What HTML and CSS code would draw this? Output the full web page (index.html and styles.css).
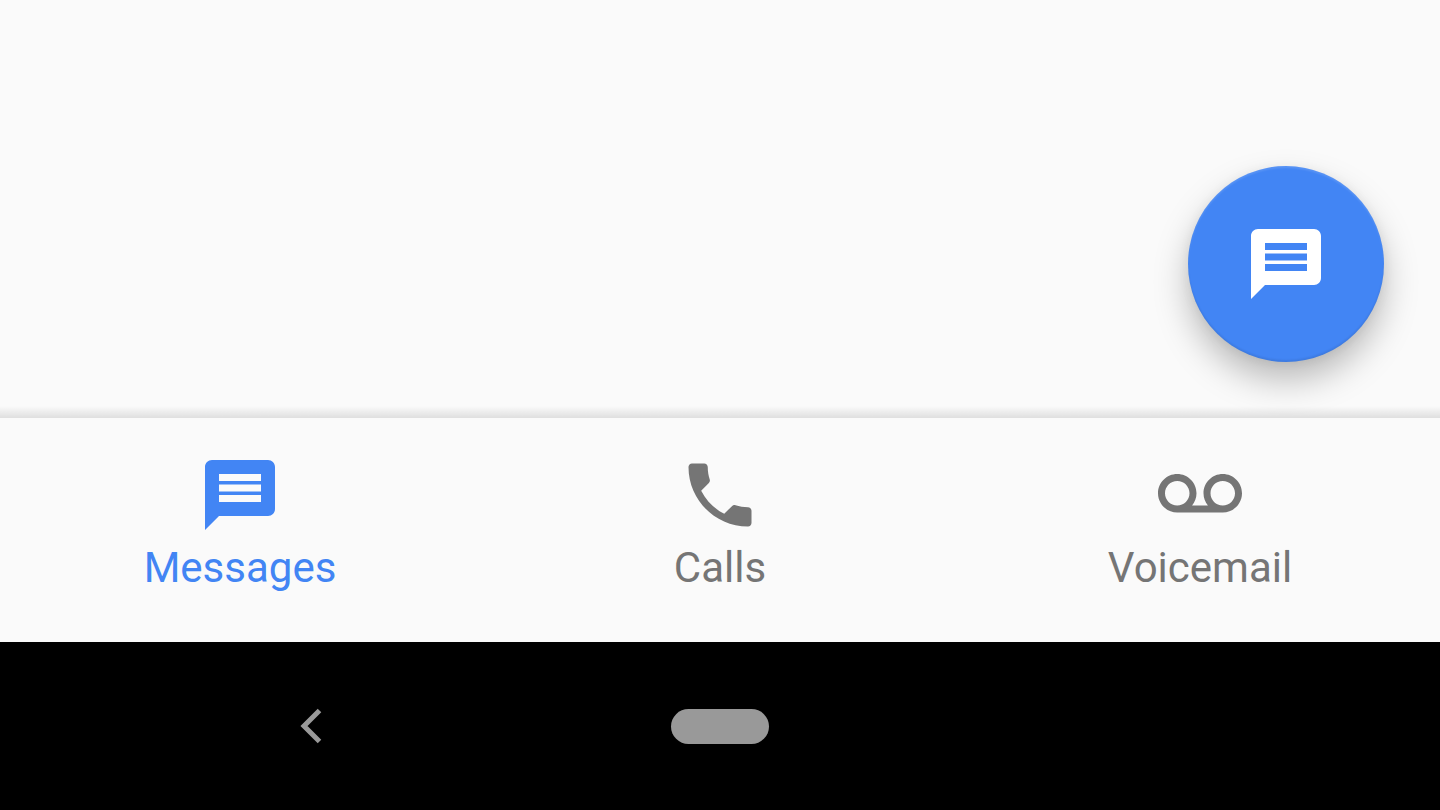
FILE: index.html
```html
<!DOCTYPE html>
<html lang="en">
<head>
  <meta charset="UTF-8" />
  <meta name="viewport" content="width=device-width, initial-scale=1" />
  <title>Messages</title>
  <link rel="stylesheet" href="styles.css">
</head>
<body>

<main class="content">
  <button class="fab" type="button" aria-label="New message">
    <svg class="icon" viewBox="0 0 24 24"><path d="M20 2H4c-1.1 0-2 .9-2 2v18l4-4h14c1.1 0 2-.9 2-2V4c0-1.1-.9-2-2-2zM6 6h12v2H6V6zm12 8H6v-2h12v2zm0-3H6V9h12v2z"/></svg>
  </button>
</main>

<!-- Bottom tabs -->
<div class="tabs-shadow"></div>
<nav class="tabs">
  <a class="tab active" href="#messages">
    <svg class="icon" viewBox="0 0 24 24"><path d="M20 2H4c-1.1 0-2 .9-2 2v18l4-4h14c1.1 0 2-.9 2-2V4c0-1.1-.9-2-2-2zM6 6h12v2H6V6zm12 8H6v-2h12v2zm0-3H6V9h12v2z"/></svg>
    <span>Messages</span>
  </a>
  <a class="tab" href="#calls">
    <svg class="icon" viewBox="0 0 24 24"><path d="M6.62 10.79c1.44 2.83 3.76 5.14 6.59 6.59l2.2-2.2c.27-.27.67-.36 1.02-.24 1.12.37 2.33.57 3.57.57.55 0 1 .45 1 1V20c0 .55-.45 1-1 1-9.39 0-17-7.61-17-17 0-.55.45-1 1-1h3.5c.55 0 1 .45 1 1 0 1.25.2 2.45.57 3.57.11.35.03.74-.25 1.02l-2.2 2.2z"/></svg>
    <span>Calls</span>
  </a>
  <a class="tab" href="#voicemail">
    <svg class="icon" viewBox="0 0 24 24"><path d="M18.5 6C15.46 6 13 8.46 13 11.5c0 1.33.47 2.55 1.26 3.5H9.74c.79-.95 1.26-2.17 1.26-3.5C11 8.46 8.54 6 5.5 6S0 8.46 0 11.5 2.46 17 5.5 17h13c3.04 0 5.5-2.46 5.5-5.5S21.54 6 18.5 6zm-13 9C3.57 15 2 13.43 2 11.5S3.57 8 5.5 8 9 9.57 9 11.5 7.43 15 5.5 15zm13 0c-1.93 0-3.5-1.57-3.5-3.5S16.57 8 18.5 8 22 9.57 22 11.5 20.43 15 18.5 15z"/></svg>
    <span>Voicemail</span>
  </a>
</nav>

<!-- System bar -->
<div class="system-bar">
  <button class="back" type="button" aria-label="Back">
    <svg viewBox="0 0 22 36"><path d="M19.500 2.500L4 18L19.500 33.500"/></svg>
  </button>
  <button class="home" type="button" aria-label="Home"></button>
</div>

</body>
</html>
```
FILE: styles.css
```css
body {
  font-family: Roboto, sans-serif;
  margin: 0;
  min-height: 100vh;
  display: flex;
  flex-direction: column;
  background: #fafafa;
}
button {
  border: none;
  padding: 0;
  cursor: pointer;
}
.icon {
  width: 84px;
  height: 84px;
  display: block;
  fill: currentColor;
}
.content {
  flex: 1;
  display: flex;
  justify-content: flex-end;
  align-items: flex-end;
  padding: 56px 56px 44px;
}
.fab {
  width: 196px;
  height: 196px;
  display: flex;
  justify-content: center;
  align-items: center;
  border-radius: 50%;
  background: #4285f4;
  color: #fff;
  box-shadow: 0 18px 34px rgba(0,0,0,0.26), 0 2px 12px rgba(0,0,0,0.06), inset 0 -2px 2px rgba(0,0,0,0.08), inset 0 2px 2px rgba(255,255,255,0.12);
}
.tabs-shadow {
  height: 12px;
  background: linear-gradient(rgba(0,0,0,0), rgba(0,0,0,0.11));
}
.tabs {
  display: flex;
}
.tab {
  flex: 1;
  display: flex;
  flex-direction: column;
  align-items: center;
  padding: 35px 0 43px;
  color: #757575;
  font-size: 42px;
  line-height: 62px;
  text-decoration: none;
}
.tab.active {
  color: #4285f4;
}
.system-bar {
  display: grid;
  grid-template-columns: 1fr 196px 1fr;
  align-items: center;
  justify-items: center;
  padding: 42px 0;
  background: #000;
}
.back {
  width: 84px;
  height: 84px;
  display: flex;
  justify-content: center;
  align-items: center;
  background: none;
}
.back svg {
  width: 22px;
  height: 36px;
  fill: none;
  stroke: #999;
  stroke-width: 5;
}
.home {
  width: 98px;
  height: 35px;
  border-radius: 18px;
  background: #999;
}
```
